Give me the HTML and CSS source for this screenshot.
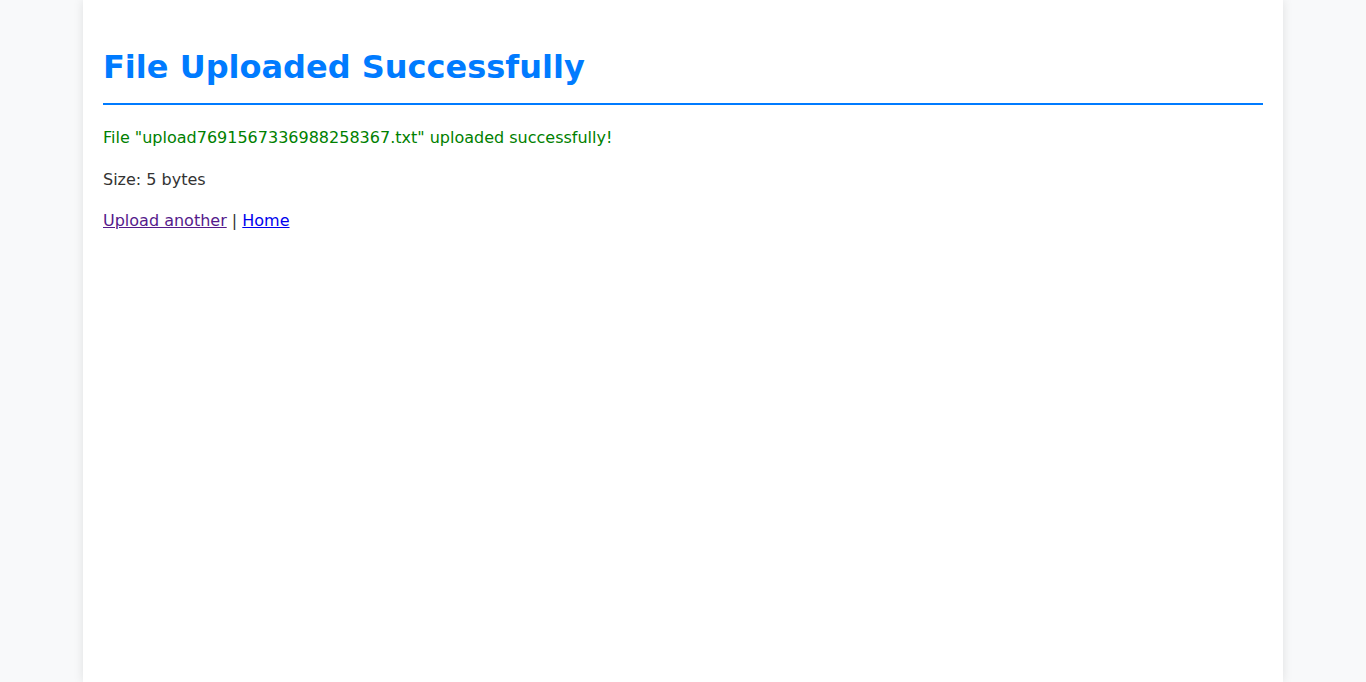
FILE: index.html
```html
<!DOCTYPE html>
<html lang="en">
<head>
<meta charset="utf-8">
<title>File Uploaded Successfully</title>
<link rel="stylesheet" href="styles.css">
</head>
<body>
<div class="container">
  <h1 class="title">File Uploaded Successfully</h1>
  <p class="success">File "upload7691567336988258367.txt" uploaded successfully!</p>
  <p class="info">Size: 5 bytes</p>
  <p class="info"><a class="visited" href="#upload">Upload another</a> | <a class="link" href="#home">Home</a></p>
</div>
</body>
</html>
```
FILE: styles.css
```css
html, body {
  margin: 0;
  padding: 0;
  height: 100%;
}
body {
  background: #f8f9fa;
  font-family: "DejaVu Sans", sans-serif;
  line-height: 1.6;
  color: #333;
}
.container {
  max-width: 1200px;
  margin: 0 auto;
  min-height: 100%;
  box-sizing: border-box;
  background: #fff;
  padding: 20px;
  box-shadow: 0 0 10px rgba(0, 0, 0, 0.1);
}
.title {
  font-size: 32px;
  color: #007bff;
  margin: 22px 0 20.5px;
  padding-bottom: 9.5px;
  border-bottom: 2px solid #007bff;
}
.success {
  color: #008000;
  margin: 16px 0;
}
.info {
  margin: 16px 0;
}
.visited { color: #551a8b; }
.link { color: #0000ee; }
```
